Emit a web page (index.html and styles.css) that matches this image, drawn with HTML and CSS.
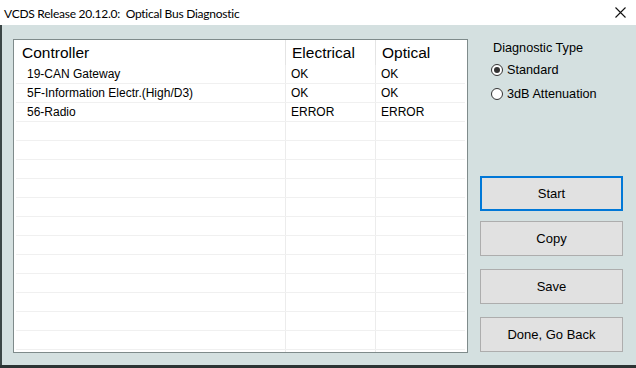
FILE: index.html
```html
<!DOCTYPE html>
<html lang="en">
<head>
    <meta charset="UTF-8">
    <title>VCDS Release 20.12.0: Optical Bus Diagnostic</title>
    <link rel="stylesheet" href="styles.css">
</head>
<body>
    <div class="window">
        <!-- Barra de título -->
        <header class="titlebar">
            <span class="title">VCDS Release 20.12.0:&nbsp; Optical Bus Diagnostic</span>
            <span class="close">
                <svg width="11" height="11" viewBox="0 0 11 11">
                    <path d="M0.5 0.5 L10.5 10.5 M10.5 0.5 L0.5 10.5" stroke="#111" stroke-width="1.1" fill="none"/>
                </svg>
            </span>
        </header>

        <main class="client">
            <!-- Lista de controladores -->
            <div class="list">
                <div class="row head">
                    <div class="cell">Controller</div>
                    <div class="cell">Electrical</div>
                    <div class="cell">Optical</div>
                </div>
                <div class="row">
                    <div class="cell first">19-CAN Gateway</div>
                    <div class="cell">OK</div>
                    <div class="cell">OK</div>
                </div>
                <div class="row">
                    <div class="cell first">5F-Information Electr.(High/D3)</div>
                    <div class="cell">OK</div>
                    <div class="cell">OK</div>
                </div>
                <div class="row">
                    <div class="cell first">56-Radio</div>
                    <div class="cell">ERROR</div>
                    <div class="cell">ERROR</div>
                </div>
                <div class="row"><div class="cell"></div><div class="cell"></div><div class="cell"></div></div>
                <div class="row"><div class="cell"></div><div class="cell"></div><div class="cell"></div></div>
                <div class="row"><div class="cell"></div><div class="cell"></div><div class="cell"></div></div>
                <div class="row"><div class="cell"></div><div class="cell"></div><div class="cell"></div></div>
                <div class="row"><div class="cell"></div><div class="cell"></div><div class="cell"></div></div>
                <div class="row"><div class="cell"></div><div class="cell"></div><div class="cell"></div></div>
                <div class="row"><div class="cell"></div><div class="cell"></div><div class="cell"></div></div>
                <div class="row"><div class="cell"></div><div class="cell"></div><div class="cell"></div></div>
                <div class="row"><div class="cell"></div><div class="cell"></div><div class="cell"></div></div>
                <div class="row"><div class="cell"></div><div class="cell"></div><div class="cell"></div></div>
                <div class="row"><div class="cell"></div><div class="cell"></div><div class="cell"></div></div>
                <div class="row"><div class="cell"></div><div class="cell"></div><div class="cell"></div></div>
                <div class="row filler"><div class="cell"></div><div class="cell"></div><div class="cell"></div></div>
            </div>

            <!-- Panel derecho -->
            <aside class="side">
                <div class="group-title">Diagnostic Type</div>
                <div class="radio"><span class="dot checked"></span>Standard</div>
                <div class="radio"><span class="dot"></span>3dB Attenuation</div>

                <div class="buttons">
                    <button class="btn start">Start</button>
                    <button class="btn">Copy</button>
                    <button class="btn">Save</button>
                    <button class="btn">Done, Go Back</button>
                </div>
            </aside>
        </main>

        <div class="taskbar"></div>
    </div>
</body>
</html>
```

FILE: styles.css
```css
body {
    margin: 0;
    padding: 0;
    font-family: "Liberation Sans", Arial, sans-serif;
    color: #000;
}
.window {
    width: 636px;
    height: 368px;
    display: flex;
    flex-direction: column;
    overflow: hidden;
}
.titlebar {
    height: 25px;
    background-color: #fff;
    display: flex;
    align-items: center;
    justify-content: space-between;
    padding: 0 10px 0 4px;
    flex-shrink: 0;
}
.title {
    font-family: Lato, "Noto Sans", sans-serif;
    font-size: 12px;
    letter-spacing: -0.25px;
    color: #000;
    margin-top: 1px;
}
.close {
    display: flex;
    margin-top: -1px;
}
.client {
    flex: 1;
    display: flex;
    background-color: #d4e0e0;
    border-left: 2px solid #3b4646;
}
.list {
    width: 455px;
    height: 314px;
    box-sizing: border-box;
    margin: 14px 0 0 11px;
    padding: 0 2px;
    background-color: #fff;
    border: 1px solid #7f8b8b;
    overflow: hidden;
}
.row {
    display: grid;
    grid-template-columns: 270px 90px 89px;
    height: 19px;
    box-sizing: border-box;
    border-bottom: 1px solid #f0f0f0;
    font-size: 12px;
    line-height: 18px;
}
.row.head {
    height: 25px;
    border-bottom: none;
    font-size: 15.5px;
    line-height: 26px;
}
.row.filler {
    border-bottom: none;
}
.cell {
    padding-left: 5px;
    border-right: 1px solid #ececec;
    white-space: nowrap;
    overflow: hidden;
}
.cell:last-child {
    border-right: none;
}
.head .cell {
    padding-left: 6px;
    border-right-color: #e4e4e4;
}
.cell.first {
    padding-left: 11px;
}
.side {
    width: 143px;
    margin-left: 12px;
    display: flex;
    flex-direction: column;
    padding: 15px 0 13px 0;
}
.group-title {
    font-size: 12.7px;
    line-height: 16px;
    padding-left: 13px;
    margin-bottom: 2px;
}
.radio {
    height: 24px;
    display: flex;
    align-items: center;
    padding-left: 11px;
    font-size: 12.7px;
}
.dot {
    width: 12px;
    height: 12px;
    box-sizing: border-box;
    border: 1px solid #333;
    border-radius: 50%;
    background-color: #fff;
    margin-right: 4px;
    display: flex;
    align-items: center;
    justify-content: center;
}
.dot.checked::after {
    content: "";
    width: 6px;
    height: 6px;
    border-radius: 50%;
    background-color: #333;
}
.buttons {
    margin-top: auto;
    display: flex;
    flex-direction: column;
    gap: 13px;
}
.btn {
    height: 35px;
    width: 143px;
    box-sizing: border-box;
    background-color: #e1e1e1;
    border: 1px solid #adadad;
    font-family: "Liberation Sans", Arial, sans-serif;
    font-size: 13px;
    color: #000;
    padding: 0;
}
.btn.start {
    border: 2px solid #0078d7;
    margin-bottom: -3px;
}
.taskbar {
    height: 3px;
    background-color: #2c3434;
    flex-shrink: 0;
}
```
